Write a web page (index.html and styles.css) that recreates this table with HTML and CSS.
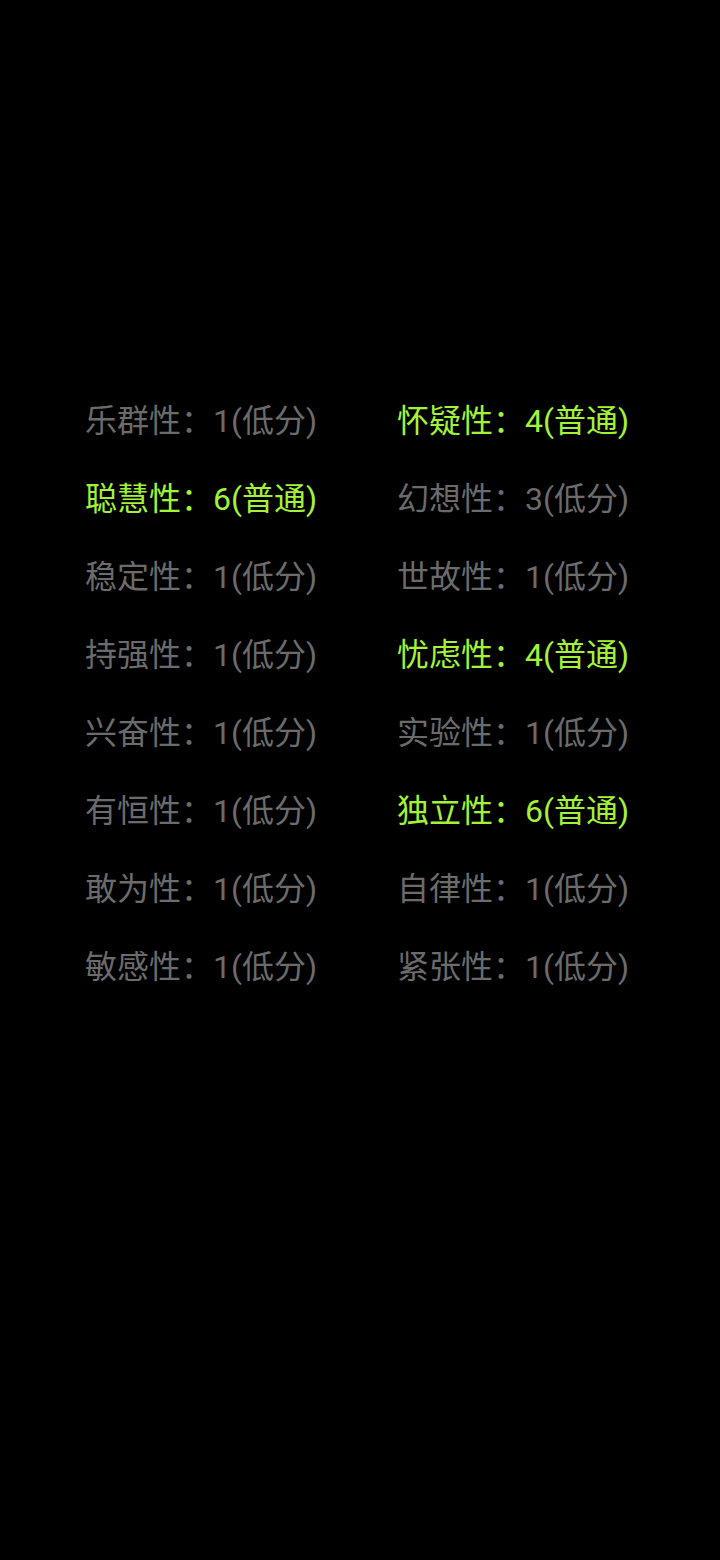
FILE: index.html
```html
<!DOCTYPE html>
<html lang="zh">
<head>
    <meta charset="UTF-8">
    <meta name="viewport" content="width=device-width, initial-scale=1.0">
    <title>16PF</title>
    <link rel="stylesheet" href="styles.css">
</head>
<body>
    <main class="result">
        <div class="grid">
            <div class="item">乐群性：1(低分)</div>
            <div class="item high">怀疑性：4(普通)</div>
            <div class="item high">聪慧性：6(普通)</div>
            <div class="item">幻想性：3(低分)</div>
            <div class="item">稳定性：1(低分)</div>
            <div class="item">世故性：1(低分)</div>
            <div class="item">持强性：1(低分)</div>
            <div class="item high">忧虑性：4(普通)</div>
            <div class="item">兴奋性：1(低分)</div>
            <div class="item">实验性：1(低分)</div>
            <div class="item">有恒性：1(低分)</div>
            <div class="item high">独立性：6(普通)</div>
            <div class="item">敢为性：1(低分)</div>
            <div class="item">自律性：1(低分)</div>
            <div class="item">敏感性：1(低分)</div>
            <div class="item">紧张性：1(低分)</div>
        </div>
    </main>
</body>
</html>
```

FILE: styles.css
```css
body {
    margin: 0;
    padding: 0;
    background-color: #000;
    font-family: Roboto, "Noto Sans CJK SC", sans-serif;
    height: 1560px;
}

.result {
    padding-top: 382px;
    padding-left: 85px;
}

.grid {
    display: grid;
    grid-template-columns: 312px 312px;
}

.item {
    height: 78px;
    line-height: 78px;
    font-size: 32px;
    color: #6b6b6b;
    white-space: nowrap;
}

.item.high {
    color: #a4f236;
}
```
